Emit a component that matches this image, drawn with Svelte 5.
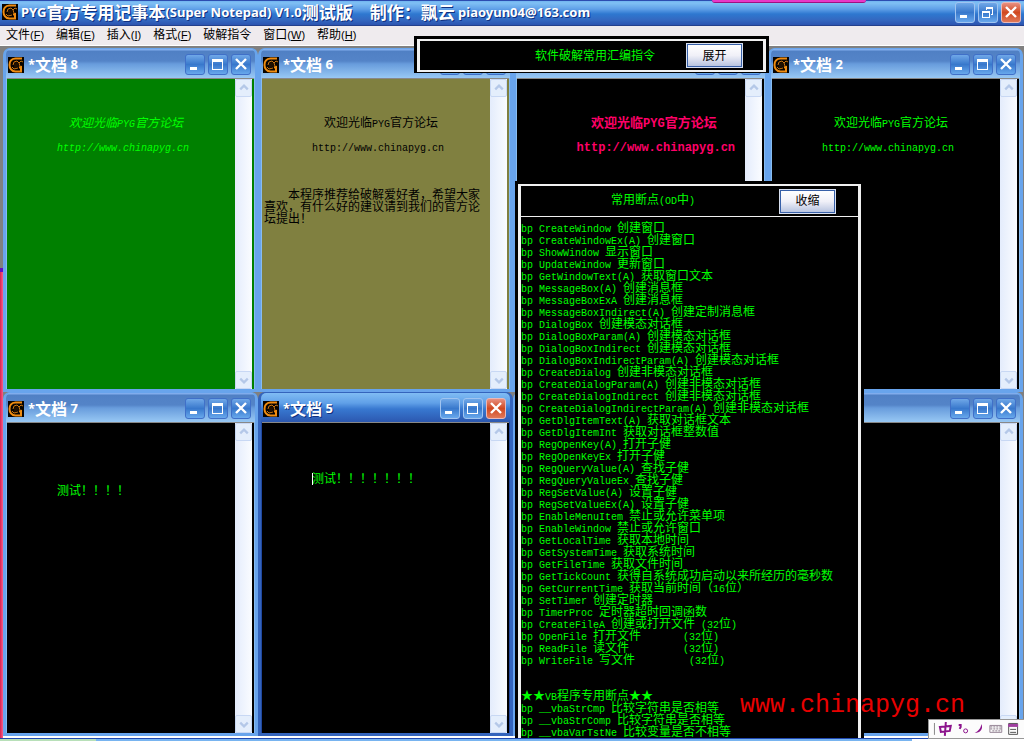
<script>
    const documents = [
        {
            name: '文档 8',
            tone: 'green',
            lines: ['', '', '', '          欢迎光临PYG官方论坛', '', '        http://www.chinapyg.cn']
        },
        {
            name: '文档 6',
            tone: 'olive',
            lines: ['', '', '', '          欢迎光临PYG官方论坛', '', '        http://www.chinapyg.cn', '', '', '',
                '    本程序推荐给破解爱好者，希望大家', '喜欢，有什么好的建议请到我们的官方论', '坛提出！']
        },
        {
            name: '',
            tone: 'pink',
            lines: ['', '', '', '          欢迎光临PYG官方论坛', '', '        http://www.chinapyg.cn']
        },
        {
            name: '文档 2',
            tone: 'black',
            lines: ['', '', '', '          欢迎光临PYG官方论坛', '', '        http://www.chinapyg.cn']
        },
        { name: '文档 7', tone: 'black', lines: ['', '', '', '', '', '        测试！！！！'] },
        { name: '文档 5', tone: 'black', active: true, lines: ['', '', '', '', '        测试！！！！！！！'] },
        { name: '', tone: 'black', lines: [] },
        { name: '', tone: 'black', lines: [] }
    ];

    const menus = [
        { label: '文件', key: 'F' },
        { label: '编辑', key: 'E' },
        { label: '插入', key: 'I' },
        { label: '格式', key: 'F' },
        { label: '破解指令' },
        { label: '窗口', key: 'W' },
        { label: '帮助', key: 'H' }
    ];

    const breakpoints = [
        'bp CreateWindow 创建窗口',
        'bp CreateWindowEx(A) 创建窗口',
        'bp ShowWindow 显示窗口',
        'bp UpdateWindow 更新窗口',
        'bp GetWindowText(A) 获取窗口文本',
        'bp MessageBox(A) 创建消息框',
        'bp MessageBoxExA 创建消息框',
        'bp MessageBoxIndirect(A) 创建定制消息框',
        'bp DialogBox 创建模态对话框',
        'bp DialogBoxParam(A) 创建模态对话框',
        'bp DialogBoxIndirect 创建模态对话框',
        'bp DialogBoxIndirectParam(A) 创建模态对话框',
        'bp CreateDialog 创建非模态对话框',
        'bp CreateDialogParam(A) 创建非模态对话框',
        'bp CreateDialogIndirect 创建非模态对话框',
        'bp CreateDialogIndirectParam(A) 创建非模态对话框',
        'bp GetDlgItemText(A) 获取对话框文本',
        'bp GetDlgItemInt 获取对话框整数值',
        'bp RegOpenKey(A) 打开子健',
        'bp RegOpenKeyEx 打开子健',
        'bp RegQueryValue(A) 查找子健',
        'bp RegQueryValueEx 查找子健',
        'bp RegSetValue(A) 设置子健',
        'bp RegSetValueEx(A) 设置子健',
        'bp EnableMenuItem 禁止或允许菜单项',
        'bp EnableWindow 禁止或允许窗口',
        'bp GetLocalTime 获取本地时间',
        'bp GetSystemTime 获取系统时间',
        'bp GetFileTime 获取文件时间',
        'bp GetTickCount 获得自系统成功启动以来所经历的毫秒数',
        'bp GetCurrentTime 获取当前时间（16位）',
        'bp SetTimer 创建定时器',
        'bp TimerProc 定时器超时回调函数',
        'bp CreateFileA 创建或打开文件 (32位)',
        'bp OpenFile 打开文件       (32位)',
        'bp ReadFile 读文件         (32位)',
        'bp WriteFile 写文件         (32位)',
        '',
        '',
        '★★VB程序专用断点★★',
        'bp __vbaStrCmp 比较字符串是否相等',
        'bp __vbaStrComp 比较字符串是否相等',
        'bp __vbaVarTstNe 比较变量是否不相等'
    ];

    // splits a line into latin and chinese runs, they use different fonts
    const runs = (text) => text.split(/([\x20-\x7e]+)/).filter((part) => part !== '');
    const isLatin = (part) => /^[\x20-\x7e]/.test(part);
</script>

{#snippet mixed(text)}{#each runs(text) as part}<span class:latin={isLatin(part)}>{part}</span>{/each}{/snippet}

{#snippet logo()}
    <svg class="logo" viewBox="0 0 16 16" aria-hidden="true">
        <rect width="16" height="16" fill="#080400" />
        <path d="M14 1.500H7.500C3 1.500 1.500 5 1.500 8s2 6.500 6 6.500H13V10l-2 .5" fill="none" stroke="#f08c10" stroke-width="2" />
        <path d="M5 8l1-3 3-1 2 2 2-2 2 1M4 10l2 2 4-1M11 6l1 3" fill="none" stroke="#c87410" />
        <path d="M6 7l2-2 2 1 1 2-2 2-3 1z" fill="#201000" />
    </svg>
{/snippet}

{#snippet controls(restore)}
    <div class="controls">
        <button aria-label="最小化">
            <svg viewBox="0 0 20 21"><path d="M5 13h7v3H5z" fill="#fff" /></svg>
        </button>
        <button aria-label="最大化">
            {#if restore}
                <svg viewBox="0 0 20 21" shape-rendering="crispEdges">
                    <path d="M8 5h7v2H8zM14 7h1v6h-1zM8 7h1v1H8zM13 12h1v1h-1z" fill="#fff" />
                    <path d="M4 9h8v2H4zM4 11h1v5H4zM11 11h1v5h-1zM5 15h6v1H5z" fill="#fff" />
                </svg>
            {:else}
                <svg viewBox="0 0 20 21" shape-rendering="crispEdges">
                    <path d="M4 5h11v3H4zM4 8h1v8H4zM14 8h1v8h-1zM5 15h9v1H5z" fill="#fff" />
                </svg>
            {/if}
        </button>
        <button class="close" aria-label="关闭">
            <svg viewBox="0 0 20 21"><path d="M5 5l10 10M15 5L5 15" stroke="#fff" stroke-width="2.4" /></svg>
        </button>
    </div>
{/snippet}

<div class="app">
    <header class="titlebar">
        {@render logo()}
        <h1>{@render mixed('PYG官方专用记事本(Super Notepad) V1.0测试版　制作：飘云 piaoyun04@163.com')}</h1>
        {@render controls(true)}
        <div class="tab"></div>
    </header>

    <nav class="menubar">
        {#each menus as menu}
            <button>{menu.label}{#if menu.key}<span class="key">(<u>{menu.key}</u>)</span>{/if}</button>
        {/each}
    </nav>

    <main class="desktop">
        <div class="edge"></div>
        {#each documents as doc}
            <section class="window" class:active={doc.active}>
                <div class="caption">
                    {@render logo()}
                    <h2>{#if doc.name}{@render mixed('*' + doc.name)}{/if}</h2>
                    {@render controls(false)}
                </div>
                <div class="body {doc.tone}">
                    <div class="text">
                        {#each doc.lines as line}
                            <p>{@render mixed(line)}</p>
                        {/each}
                        {#if doc.active}<i class="caret"></i>{/if}
                    </div>
                    <div class="scrollbar">
                        <button aria-label="向上">
                            <svg viewBox="0 0 16 17"><path d="M4 10l4-4 4 4" fill="none" stroke="#b4c8e8" stroke-width="2.4" /></svg>
                        </button>
                        <button aria-label="向下">
                            <svg viewBox="0 0 16 17"><path d="M4 7l4 4 4-4" fill="none" stroke="#b4c8e8" stroke-width="2.4" /></svg>
                        </button>
                    </div>
                </div>
            </section>
        {/each}

        <aside class="panel commands">
            <div class="panel-head">
                <span>软件破解常用汇编指令</span>
                <button>展开</button>
            </div>
        </aside>

        <aside class="panel breakpoints">
            <div class="panel-head">
                <span>{@render mixed('常用断点(OD中)')}</span>
                <button>收缩</button>
            </div>
            <div class="list">
                {#each breakpoints as line}
                    <p>{@render mixed(line)}</p>
                {/each}
            </div>
        </aside>

        <div class="watermark">www.chinapyg.cn</div>

        <div class="ime">
            <svg viewBox="0 0 96 18" aria-hidden="true">
                <path d="M5.500 3v12" stroke="#888" />
                <path d="M11 7l11-1-1 5-9 1zM17 2l-1 14" fill="none" stroke="#8c148c" stroke-width="2" />
                <path d="M30 5h2v2l-1 2" fill="none" stroke="#8c148c" stroke-width="2" />
                <circle cx="37" cy="11" r="2" fill="none" stroke="#8c148c" />
                <path d="M53 4c2 5-1 9-7 9 4-2 6-4 7-9z" fill="#8c148c" />
                <path d="M62 7h12M62 9h12M64 11h8" fill="none" stroke="#887888" stroke-dasharray="2 1" />
                <path d="M61.500 5.500h12v7h-12z" fill="none" stroke="#988898" />
                <path d="M80.500 3.500h9v11h-9zM82 9.500h6M82 12.500h6" fill="none" stroke="#555" />
                <path d="M80 4h10v3H80z" fill="#a040a0" />
            </svg>
        </div>
    </main>

    <footer class="taskbar"><span class="start"></span><span class="tasks"></span><span class="tray"></span></footer>
</div>

<style>
    :global(body) {
        margin: 0;
    }

    .app {
        height: 100vh;
        display: flex;
        flex-direction: column;
        overflow: hidden;
        font: 12px/12px "Liberation Sans", "Noto Sans CJK SC", sans-serif;
    }

    h1, h2, p {
        margin: 0;
        white-space: pre;
    }

    button {
        margin: 0;
        padding: 0;
        border: 0;
        background: none;
        font: inherit;
        color: inherit;
    }

    svg {
        display: block;
    }

    .titlebar {
        position: relative;
        height: 26px;
        box-sizing: border-box;
        display: flex;
        align-items: center;
        padding: 0 3px 2px 2px;
        background: linear-gradient(#2c4cb0 0 1px, #70b4f0 1px, #80c0f4 3px, #60a0e8 9px, #2e78d0 14px, #3468c0 20px, #2c54b0 25px, #24408c 25px);
    }

    .tab {
        position: absolute;
        top: 0;
        left: 712px;
        width: 154px;
        height: 2px;
        background: #e838c8;
        border-bottom: 1px solid #a01080;
        border-radius: 0 0 3px 3px;
    }

    .logo {
        width: 16px;
        height: 16px;
        flex: none;
    }

    h1, h2 {
        flex: 1;
        display: flex;
        align-items: center;
        color: #fff;
        font: bold 16px/20px "Noto Sans CJK SC", sans-serif;
    }

    h1 {
        margin-left: 3px;
        font-size: 17px;
        text-shadow: 1px 1px #103080;
    }

    h1 .latin, h2 .latin {
        font: bold 13px/20px "Noto Sans", sans-serif;
    }

    .controls {
        display: flex;
        gap: 3px;
    }

    .controls button {
        width: 20px;
        height: 21px;
        box-sizing: border-box;
        border: 1px solid #4070c8;
        border-radius: 3px;
        background: linear-gradient(#70a8e8, #3878cc 50%, #68a8ec);
    }

    .controls svg {
        width: 20px;
        height: 21px;
        margin: -1px;
    }

    .titlebar .controls button, .active .controls button {
        border-color: #a0c4f0;
    }

    .titlebar .controls .close, .active .controls .close {
        background: linear-gradient(#e89080, #d04820 50%, #e07858);
        border-color: #e8b8b8;
    }

    .menubar {
        height: 20px;
        box-sizing: border-box;
        display: flex;
        align-items: center;
        gap: 12px;
        padding: 0 6px 1px;
        background: #efebee;
        border-bottom: 1px solid #fff;
    }

    .key {
        font-size: 11px;
    }

    .desktop {
        position: relative;
        flex: 1;
        min-height: 0;
        box-sizing: border-box;
        display: grid;
        grid-template: 1fr 1fr / repeat(4, 1fr);
        padding: 2px 1px 2px 3px;
        background: linear-gradient(#808080 0 690px, #fff 690px);
    }

    .edge {
        position: absolute;
        left: 0;
        top: 222px;
        bottom: 0;
        width: 3px;
        background: linear-gradient(90deg, #d82050, #f86088);
        border-top: 4px solid #6010c0;
    }

    .window {
        min-height: 0;
        display: flex;
        flex-direction: column;
        box-sizing: border-box;
        border: solid #68a4ec;
        border-width: 1px 3px 3px;
        border-radius: 7px 7px 0 0;
        background: #90c4f0;
        box-shadow: inset 0 0 0 1px #88bcf0;
    }

    .window.active {
        border-color: #3464bc;
        background: #2048a0;
        box-shadow: inset 0 0 0 1px #2048a0;
    }

    .caption {
        height: 29px;
        box-sizing: border-box;
        display: flex;
        align-items: center;
        padding: 2px 4px 0 2px;
        border-radius: 5px 5px 0 0;
        background: linear-gradient(#80acec 0 1px, #5080c4 2px, #5484c8 12px, #689cdc 15px, #98c8f4 29px);
    }

    .active .caption {
        background: linear-gradient(#80bcf4, #60a0e8 10px, #3878d0 16px, #2c58b0 29px);
    }

    h2 {
        margin-left: 4px;
        padding-bottom: 2px;
    }

    .active h2 {
        text-shadow: 1px 1px #103080;
    }

    .body {
        flex: 1;
        min-height: 0;
        display: flex;
        margin: 0 1px;
        padding-right: 2px;
        border-top: 1px solid #888;
        background: #000;
        color: #0f0;
    }

    .body.green {
        background: #008000;
    }

    .body.olive {
        background: #808040;
        color: #000;
    }

    .body.pink {
        color: #ff0068;
    }

    .green .text {
        font-style: italic;
    }

    .text {
        position: relative;
        flex: 1;
        min-width: 0;
        overflow: hidden;
        padding: 2px;
    }

    .text p, .list p {
        height: 12px;
    }

    .latin {
        font-family: "Liberation Mono", monospace;
        font-size: 10px;
    }

    .pink p {
        font-size: 13px;
        font-weight: bold;
    }

    .pink .latin {
        font-size: 12px;
    }

    .caret {
        position: absolute;
        left: 50px;
        top: 50px;
        width: 1px;
        height: 12px;
        background: #fff;
    }

    .scrollbar {
        width: 17px;
        display: flex;
        flex-direction: column;
        justify-content: space-between;
        background: linear-gradient(90deg, #e4ecfc, #fafcff);
    }

    .scrollbar button {
        height: 18px;
        box-sizing: border-box;
        border: 1px solid #c8d8f4;
        border-radius: 2px;
        background: #e4eefc;
    }

    .scrollbar svg {
        width: 16px;
        height: 16px;
    }

    .panel {
        position: absolute;
        box-sizing: border-box;
        background: #000;
        border: 3px solid #000;
        color: #0f0;
    }

    .commands {
        left: 414px;
        top: -10px;
        width: 355px;
        border-bottom-width: 1px;
    }

    .breakpoints {
        left: 515px;
        top: 135px;
        bottom: 0;
        width: 349px;
        border-bottom: 0;
        display: flex;
        flex-direction: column;
    }

    .panel-head {
        height: 33px;
        box-sizing: border-box;
        display: flex;
        align-items: center;
        justify-content: flex-end;
        gap: 31px;
        padding-right: 20px;
        border: solid #f0f0f0;
        border-width: 2px 3px;
        white-space: pre;
    }

    .breakpoints .panel-head {
        gap: 84px;
        padding-right: 22px;
        border-bottom-width: 1px;
        flex: none;
    }

    .panel-head button {
        width: 57px;
        height: 25px;
        border: 2px solid #3860a8;
        outline: 1px solid #d8e0f0;
        outline-offset: -1px;
        background: linear-gradient(#fff, #f0f0f8 50%, #b8c4e0);
        color: #000;
    }

    .list {
        flex: 1;
        min-height: 0;
        overflow: hidden;
        border: solid #f0f0f0;
        border-width: 0 3px;
        padding-top: 5px;
    }

    .watermark {
        position: absolute;
        right: 59px;
        bottom: 18px;
        font: 25px/28px "Liberation Mono", monospace;
        color: #e80000;
    }

    .ime {
        position: absolute;
        right: 0;
        bottom: 0;
        width: 95px;
        box-sizing: border-box;
        background: #fcfcfc;
        box-shadow: 0 0 0 1px #989898;
    }

    .taskbar {
        height: 3px;
        box-sizing: border-box;
        display: flex;
        border-top: 1px solid #2048b0;
    }

    .start {
        width: 96px;
        background: #b8e0b8;
    }

    .tasks {
        flex: 1;
        background: #78b4f0;
    }

    .tray {
        width: 112px;
        background: #fff;
    }
</style>
